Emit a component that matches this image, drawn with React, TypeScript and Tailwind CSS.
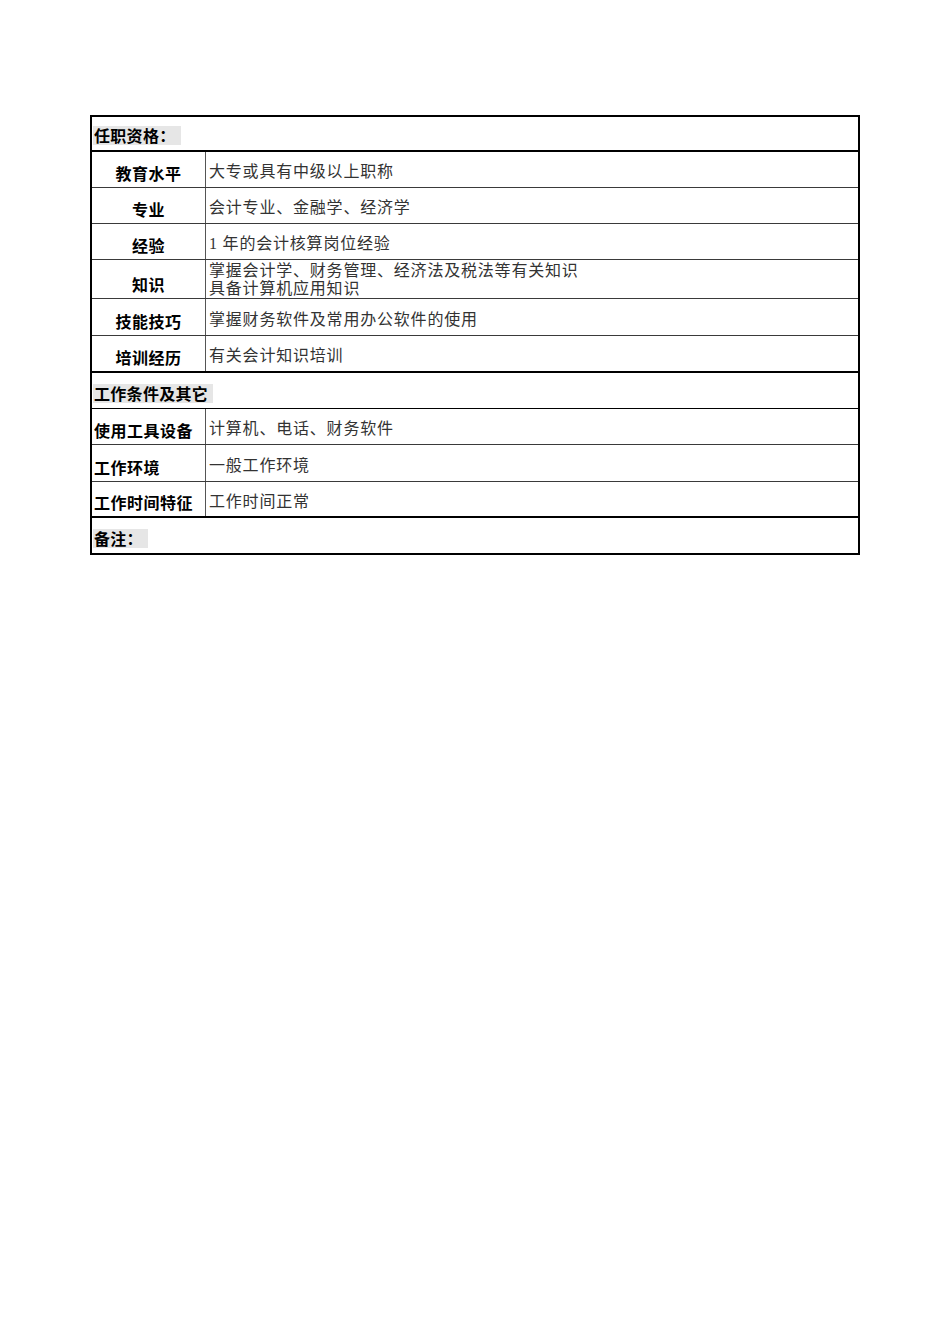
import React from "react";

const labelFont = { fontFamily: '"Noto Sans CJK SC", sans-serif' };
const valueFont = { fontFamily: '"Liberation Serif", "Noto Sans CJK SC", serif' };

type Row = { label: string; value: string[]; h: string; thick?: boolean; center?: boolean };

const quals: Row[] = [
  { label: "教育水平", value: ["大专或具有中级以上职称"], h: "h-[36px]", center: true },
  { label: "专业", value: ["会计专业、金融学、经济学"], h: "h-[36px]", center: true },
  { label: "经验", value: ["1 年的会计核算岗位经验"], h: "h-[36px]", center: true },
  {
    label: "知识",
    value: ["掌握会计学、财务管理、经济法及税法等有关知识", "具备计算机应用知识"],
    h: "h-[39px]",
    center: true,
  },
  { label: "技能技巧", value: ["掌握财务软件及常用办公软件的使用"], h: "h-[37px]", center: true },
  { label: "培训经历", value: ["有关会计知识培训"], h: "h-[37px]", center: true, thick: true },
];

const conditions: Row[] = [
  { label: "使用工具设备", value: ["计算机、电话、财务软件"], h: "h-[36px]" },
  { label: "工作环境", value: ["一般工作环境"], h: "h-[37px]" },
  { label: "工作时间特征", value: ["工作时间正常"], h: "h-[36px]", thick: true },
];

function SectionHeader({ title, h, thick }: { title: string; h: string; thick?: boolean }) {
  return (
    <div className={`${h} flex items-end pb-[5px] pl-[1px] ${thick ? "border-b-2 border-black" : ""}`}>
      <span
        className="inline-block bg-[#e6e6e6] h-[19px] leading-[19px] pr-[5px] pl-[1px] text-[16px] font-bold text-black tracking-[0.3px]"
        style={labelFont}
      >
        {title}
      </span>
    </div>
  );
}

function DataRow({ row }: { row: Row }) {
  const multi = row.value.length > 1;
  return (
    <div
      className={`${row.h} flex ${row.thick ? "border-b-2 border-black" : "border-b border-[#3a3a3a]"}`}
    >
      <div
        className={`w-[114px] shrink-0 border-r border-[#555] flex items-end pb-[4px] ${
          row.center ? "justify-center" : "pl-[2px]"
        }`}
      >
        <span className="text-[16px] font-bold text-black leading-[19px] tracking-[0.5px]" style={labelFont}>
          {row.label}
        </span>
      </div>
      <div className={`flex flex-col justify-center pl-[3px] ${multi ? "pt-[2px]" : "pt-[4px]"}`}>
        {row.value.map((v) => (
          <div
            key={v}
            className={`text-[16px] text-[#333] tracking-[0.8px] ${multi ? "leading-[18px]" : "leading-[19px]"}`}
            style={valueFont}
          >
            {v}
          </div>
        ))}
      </div>
    </div>
  );
}

export default function App() {
  return (
    <div className="min-h-[1344px] w-[950px] bg-white pt-[115px] pl-[90px]">
      <div className="w-[770px] border-2 border-black">
        <SectionHeader title="任职资格：" h="h-[35px]" thick />
        {quals.map((r) => (
          <DataRow key={r.label} row={r} />
        ))}
        <div className="border-b border-black">
          <SectionHeader title="工作条件及其它" h="h-[35px]" />
        </div>
        {conditions.map((r) => (
          <DataRow key={r.label} row={r} />
        ))}
        <SectionHeader title="备注：" h="h-[35px]" />
      </div>
    </div>
  );
}
